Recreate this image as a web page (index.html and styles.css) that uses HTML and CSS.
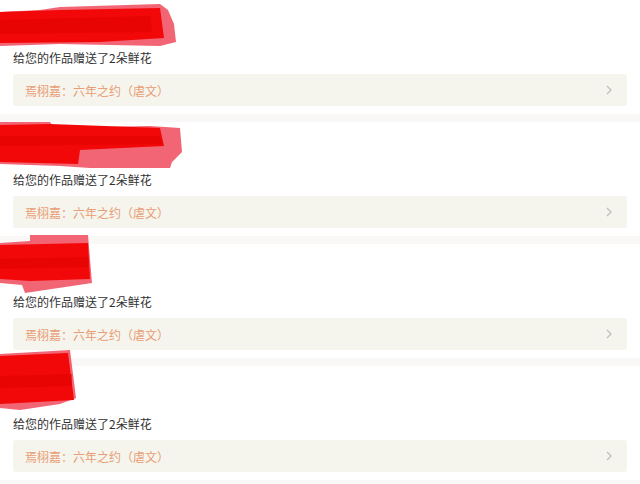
FILE: index.html
```html
<!DOCTYPE html>
<html lang="zh-CN">
<head>
<meta charset="UTF-8">
<meta name="viewport" content="width=device-width, initial-scale=1.0">
<title>鲜花消息</title>
<link rel="stylesheet" href="styles.css">
</head>
<body>
<div class="list">

  <div class="item">
    <svg class="scribble s1" width="178" height="44" viewBox="0 0 178 44">
      <path d="M0 8 L40 6 L60 3 L160 0 L168 6 L174 20 L176 38 L160 42 L60 40 L0 42 Z" fill="#f04a5c" opacity="0.85"/>
      <path d="M0 8 L60 6 L160 4 L164 34 L100 38 L0 39 Z" fill="#f20808"/>
      <path d="M0 16 L150 12 L152 28 L0 30 Z" fill="#e00000" opacity="0.5"/>
    </svg>
    <div class="head"></div>
    <p class="msg">给您的作品赠送了2朵鲜花</p>
    <a class="book" href="#">
      <span>焉栩嘉：六年之约（虐文）</span>
      <svg class="chev" width="8" height="10" viewBox="0 0 8 10"><path d="M2 1 L6 5 L2 9" fill="none" stroke="#bdbdbd" stroke-width="1.2"/></svg>
    </a>
  </div>

  <div class="item">
    <svg class="scribble s2" width="184" height="48" viewBox="0 0 184 48">
      <path d="M0 0 L50 0 L54 6 L150 4 L180 6 L182 30 L172 40 L170 46 L90 46 L60 44 L0 42 Z" fill="#f04a5c" opacity="0.85"/>
      <path d="M0 3 L50 2 L160 6 L164 24 L80 28 L78 42 L0 40 Z" fill="#f20808"/>
      <path d="M0 14 L160 14 L162 22 L0 24 Z" fill="#e00000" opacity="0.5"/>
    </svg>
    <div class="head"></div>
    <p class="msg">给您的作品赠送了2朵鲜花</p>
    <a class="book" href="#">
      <span>焉栩嘉：六年之约（虐文）</span>
      <svg class="chev" width="8" height="10" viewBox="0 0 8 10"><path d="M2 1 L6 5 L2 9" fill="none" stroke="#bdbdbd" stroke-width="1.2"/></svg>
    </a>
  </div>

  <div class="item">
    <svg class="scribble s3" width="94" height="60" viewBox="0 0 94 60">
      <path d="M30 0 L88 0 L92 48 L25 58 L22 50 L0 48 L0 8 L30 6 Z" fill="#f04a5c" opacity="0.85"/>
      <path d="M0 10 L88 8 L90 44 L30 46 L0 44 Z" fill="#f20808"/>
      <path d="M0 24 L88 22 L88 32 L0 34 Z" fill="#e00000" opacity="0.5"/>
    </svg>
    <div class="head"></div>
    <p class="msg">给您的作品赠送了2朵鲜花</p>
    <a class="book" href="#">
      <span>焉栩嘉：六年之约（虐文）</span>
      <svg class="chev" width="8" height="10" viewBox="0 0 8 10"><path d="M2 1 L6 5 L2 9" fill="none" stroke="#bdbdbd" stroke-width="1.2"/></svg>
    </a>
  </div>

  <div class="item">
    <svg class="scribble s4" width="78" height="62" viewBox="0 0 78 62">
      <path d="M0 4 L70 0 L76 48 L60 54 L20 60 L0 58 Z" fill="#f04a5c" opacity="0.85"/>
      <path d="M0 6 L68 3 L74 50 L0 54 Z" fill="#f20808"/>
      <path d="M0 26 L72 24 L72 36 L0 38 Z" fill="#e00000" opacity="0.5"/>
    </svg>
    <div class="head"></div>
    <p class="msg">给您的作品赠送了2朵鲜花</p>
    <a class="book" href="#">
      <span>焉栩嘉：六年之约（虐文）</span>
      <svg class="chev" width="8" height="10" viewBox="0 0 8 10"><path d="M2 1 L6 5 L2 9" fill="none" stroke="#bdbdbd" stroke-width="1.2"/></svg>
    </a>
  </div>

</div>
</body>
</html>
```

FILE: styles.css
```css
body {
  margin: 0;
  background: #fff;
  font-family: "Noto Sans CJK SC", "Noto Sans", sans-serif;
}

.list {
  display: flex;
  flex-direction: column;
}

.item {
  position: relative;
  padding: 0 13px 8px;
  border-bottom: 8px solid #faf7f7;
  background: #fff;
}

.head {
  height: 50px;
}

.msg {
  margin: 0;
  height: 16px;
  line-height: 16px;
  font-size: 12px;
  color: #333;
}

.book {
  display: flex;
  align-items: center;
  justify-content: space-between;
  height: 32px;
  margin-top: 8px;
  padding: 0 14px 0 12px;
  background: #f5f5ee;
  border-radius: 3px;
  text-decoration: none;
  font-size: 12px;
  color: #e99d74;
}

.chev {
  display: block;
}

.scribble {
  position: absolute;
  left: 0;
}

.s1 { top: 4px; }
.s2 { top: 0; }
.s3 { top: -9px; }
.s4 { top: -16px; }
```
